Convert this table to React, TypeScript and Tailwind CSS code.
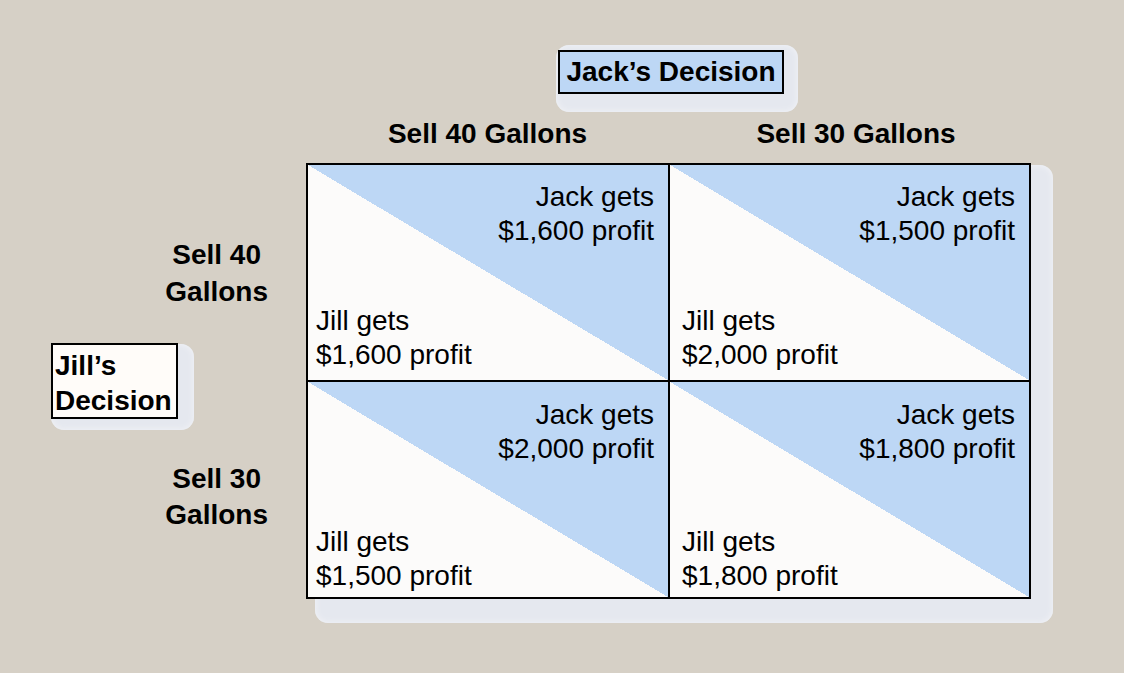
const cells = [
  { jack: '$1,600', jill: '$1,600', pl: 'pl-[8px]', pb: 'pb-[8px]', pt: 'pt-[15px]' },
  { jack: '$1,500', jill: '$2,000', pl: 'pl-[12px]', pb: 'pb-[8px]', pt: 'pt-[15px]' },
  { jack: '$2,000', jill: '$1,500', pl: 'pl-[8px]', pb: 'pb-[4px]', pt: 'pt-[16px]' },
  { jack: '$1,800', jill: '$1,800', pl: 'pl-[12px]', pb: 'pb-[4px]', pt: 'pt-[16px]' },
];

function Panel({ className }: { className: string }) {
  // soft rounded card peeking out behind a box
  return (
    <div
      className={`absolute rounded-[13px] bg-[#e5e8ef] shadow-[inset_0_0_6px_#f3f4f7] ${className}`}
    />
  );
}

export default function App() {
  return (
    <div className="flex h-[673px] w-[1124px] bg-[#d6d0c6] font-['Liberation_Sans',Arial,sans-serif] text-black">
      {/* Jill's side: row labels */}
      <div className="grid w-[306px] grid-rows-[218px_218px] pt-[163px]">
        <div className="col-start-1 row-start-1 mr-[38px] mt-[2px] self-center justify-self-end text-center text-[28px] font-bold leading-[37px]">
          Sell 40
          <br />
          Gallons
        </div>
        <div className="col-start-1 row-start-2 mr-[38px] mt-[14px] self-center justify-self-end text-center text-[28px] font-bold leading-[36px]">
          Sell 30
          <br />
          Gallons
        </div>
        <div className="relative col-start-1 row-span-2 row-start-1 ml-[51px] self-center justify-self-start">
          <Panel className="-bottom-[11px] left-0 -right-[16px] top-[1px]" />
          <div className="relative h-[76px] w-[127px] border-2 border-black bg-[#fffcf9] pl-[2px] pt-[3px] text-[28px] font-bold leading-[35px]">
            Jill’s
            <br />
            Decision
          </div>
        </div>
      </div>

      {/* Jack's side: title, column headers, payoff grid */}
      <div className="flex w-[725px] flex-col pt-[50px]">
        <div className="relative ml-[5px] self-center">
          <Panel className="-bottom-[18px] -left-[2px] -right-[14px] -top-[5px]" />
          <div className="relative flex h-[44px] w-[226px] items-center justify-center border-2 border-black bg-[#bdd7f5] text-[28px] font-bold leading-[40px]">
            Jack’s Decision
          </div>
        </div>

        <div className="mt-[24px] mb-[13px] flex text-[28px] font-bold leading-[32px]">
          <div className="w-[363px] text-center">Sell 40 Gallons</div>
          <div className="w-[362px] pl-[12px] text-center">Sell 30 Gallons</div>
        </div>

        <div className="relative">
          <Panel className="-bottom-[24px] left-[9px] -right-[22px] top-[2px]" />
          <div className="relative grid grid-cols-[360px_359px] grid-rows-[215px_215px] gap-[2px] bg-black p-[2px]">
            {cells.map((c, i) => (
              <div
                key={i}
                className={`flex flex-col justify-between bg-[linear-gradient(to_top_right,#fcfbfa_50%,#bdd7f5_50%)] pr-[14px] text-[28px] leading-[34px] ${c.pl} ${c.pb} ${c.pt}`}
              >
                <div className="text-right">
                  Jack gets
                  <br />
                  {c.jack} profit
                </div>
                <div>
                  Jill gets
                  <br />
                  {c.jill} profit
                </div>
              </div>
            ))}
          </div>
        </div>
      </div>
    </div>
  );
}
